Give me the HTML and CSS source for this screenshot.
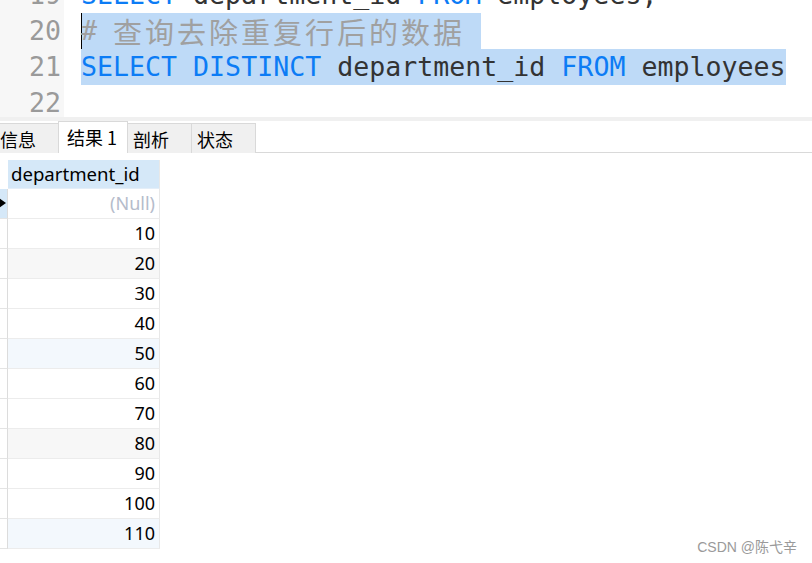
FILE: index.html
```html
<!DOCTYPE html>
<html lang="zh">
<head>
<meta charset="utf-8">
<title>Query</title>
<link rel="stylesheet" href="styles.css">
</head>
<body>
<div class="page">
  <div class="editor">
    <div class="lines">
      <div class="line"><span class="ln">19</span><span class="code"><span class="kw">SELECT</span> department_id <span class="kw">FROM</span> employees;</span></div>
      <div class="line"><span class="ln">20</span><span class="code"><span class="sel cursor"><span class="cm"># <span class="cjk">查询去除重复行后的数据</span> </span></span></span></div>
      <div class="line"><span class="ln">21</span><span class="code"><span class="sel"><span class="kw">SELECT</span> <span class="kw">DISTINCT</span> department_id <span class="kw">FROM</span> employees</span></span></div>
      <div class="line"><span class="ln">22</span><span class="code"></span></div>
    </div>
  </div>
  <div class="sep"></div>
  <div class="tabbar">
    <div class="tab first">信息</div>
    <div class="tab active">结果 1</div>
    <div class="tab">剖析</div>
    <div class="tab">状态</div>
  </div>
  <div class="grid">
    <div class="ind head"></div><div class="cell head">department_id</div>
    <div class="ind current"><span class="arrow"></span></div><div class="cell null">(Null)</div>
    <div class="ind"></div><div class="cell">10</div>
    <div class="ind"></div><div class="cell alt">20</div>
    <div class="ind"></div><div class="cell">30</div>
    <div class="ind"></div><div class="cell">40</div>
    <div class="ind"></div><div class="cell blue">50</div>
    <div class="ind"></div><div class="cell">60</div>
    <div class="ind"></div><div class="cell">70</div>
    <div class="ind"></div><div class="cell alt">80</div>
    <div class="ind"></div><div class="cell">90</div>
    <div class="ind"></div><div class="cell">100</div>
    <div class="ind"></div><div class="cell blue">110</div>
  </div>
  <div class="watermark">CSDN @陈弋辛</div>
</div>
</body>
</html>
```
FILE: styles.css
```css
html, body {
  margin: 0;
  padding: 0;
  background: #ffffff;
}
.page {
  width: 812px;
  height: 563px;
  overflow: hidden;
  position: relative;
  background: #ffffff;
}
.editor {
  height: 117px;
  overflow: hidden;
  font-family: "DejaVu Sans Mono", "Noto Sans CJK SC", monospace;
  font-size: 26.6px;
}
.lines {
  margin-top: -23px;
}
.line {
  display: flex;
  height: 36px;
  line-height: 36px;
  white-space: pre;
}
.ln {
  width: 61px;
  padding-right: 3px;
  text-align: right;
  color: #9a9a9a;
  background: #f7f7f7;
  flex: none;
}
.code {
  padding-left: 17px;
  color: #333333;
}
.kw {
  color: #0c7cf5;
}
.cm {
  color: #a0a0a0;
}
.cjk {
  font-family: "Noto Sans CJK SC", sans-serif;
  font-size: 29px;
  letter-spacing: 3px;
  vertical-align: top;
}
.sel {
  display: inline-block;
  height: 36px;
  background: #bedaf7;
}
.cursor {
  box-shadow: inset 1px 0 0 #000000;
}
.sep {
  height: 4px;
  background: #f0f0f0;
}
.tabbar {
  height: 31px;
  display: flex;
  align-items: flex-end;
  border-bottom: 1px solid #d9d9d9;
  font-family: "Noto Sans CJK SC", sans-serif;
  font-size: 18px;
  color: #000000;
}
.tab {
  height: 30px;
  line-height: 30px;
  width: 64px;
  box-sizing: border-box;
  background: #f0f0f0;
  border: 1px solid #d9d9d9;
  border-bottom: none;
  border-left: none;
  padding-left: 5px;
  margin-bottom: -1px;
}
.tab.first {
  width: 58px;
  padding-left: 0;
  border-right: none;
}
.tab.active {
  height: 32px;
  width: 70px;
  line-height: 30px;
  background: #ffffff;
  border-left: 1px solid #d9d9d9;
  padding-left: 8px;
}
.grid {
  margin-top: 7px;
  display: grid;
  grid-template-columns: 8px 152px;
  grid-auto-rows: 30px;
  grid-template-rows: 29px;
  font-family: "Noto Sans", sans-serif;
  font-size: 18px;
}
.ind {
  box-sizing: border-box;
  border-right: 1px solid #dcdcdc;
  border-bottom: 1px solid #e4e4e4;
  position: relative;
}
.ind.head {
  border-bottom: none;
  border-right: none;
}
.ind.current {
  background: #d5e8f8;
}
.arrow {
  position: absolute;
  left: -1px;
  top: 9px;
  width: 0;
  height: 0;
  border-top: 5px solid transparent;
  border-bottom: 5px solid transparent;
  border-left: 7px solid #000000;
}
.cell {
  box-sizing: border-box;
  border-right: 1px solid #e8e8e8;
  border-bottom: 1px solid #ececec;
  text-align: right;
  padding-right: 4px;
  line-height: 29px;
  color: #000000;
}
.cell.head {
  background: #d5e8f8;
  text-align: left;
  padding-left: 3px;
  line-height: 28px;
  font-size: 18.6px;
  border-bottom: 1px solid #e4eef8;
}
.cell.null {
  color: #b5bccb;
}
.cell.alt {
  background: #f7f7f7;
}
.cell.blue {
  background: #f3f8fd;
}
.watermark {
  position: absolute;
  right: 15px;
  bottom: 7px;
  font-family: "Liberation Sans", "Noto Sans CJK SC", sans-serif;
  font-size: 14px;
  color: #9a9a9a;
}
```
